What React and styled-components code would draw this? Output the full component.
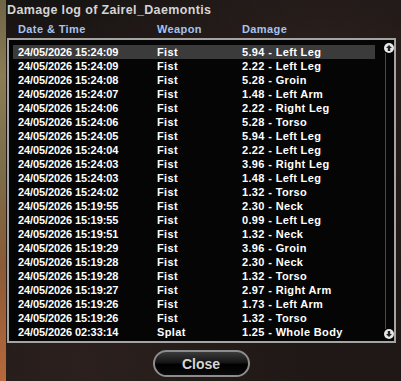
import React from 'react';
import styled, { createGlobalStyle } from 'styled-components';

const rows = [
  ['24/05/2026 15:24:09', 'Fist', '5.94 - Left Leg'],
  ['24/05/2026 15:24:09', 'Fist', '2.22 - Left Leg'],
  ['24/05/2026 15:24:08', 'Fist', '5.28 - Groin'],
  ['24/05/2026 15:24:07', 'Fist', '1.48 - Left Arm'],
  ['24/05/2026 15:24:06', 'Fist', '2.22 - Right Leg'],
  ['24/05/2026 15:24:06', 'Fist', '5.28 - Torso'],
  ['24/05/2026 15:24:05', 'Fist', '5.94 - Left Leg'],
  ['24/05/2026 15:24:04', 'Fist', '2.22 - Left Leg'],
  ['24/05/2026 15:24:03', 'Fist', '3.96 - Right Leg'],
  ['24/05/2026 15:24:03', 'Fist', '1.48 - Left Leg'],
  ['24/05/2026 15:24:02', 'Fist', '1.32 - Torso'],
  ['24/05/2026 15:19:55', 'Fist', '2.30 - Neck'],
  ['24/05/2026 15:19:55', 'Fist', '0.99 - Left Leg'],
  ['24/05/2026 15:19:51', 'Fist', '1.32 - Neck'],
  ['24/05/2026 15:19:29', 'Fist', '3.96 - Groin'],
  ['24/05/2026 15:19:28', 'Fist', '2.30 - Neck'],
  ['24/05/2026 15:19:28', 'Fist', '1.32 - Torso'],
  ['24/05/2026 15:19:27', 'Fist', '2.97 - Right Arm'],
  ['24/05/2026 15:19:26', 'Fist', '1.73 - Left Arm'],
  ['24/05/2026 15:19:26', 'Fist', '1.32 - Torso'],
  ['24/05/2026 02:33:14', 'Splat', '1.25 - Whole Body'],
];

const GlobalStyle = createGlobalStyle`
  html, body {
    margin: 0;
    padding: 0;
    background: #1e1715;
  }
  body {
    font-family: "Liberation Sans", Arial, sans-serif;
    -webkit-font-smoothing: antialiased;
  }
`;

const ScrollArrow = ({ down }) => (
  <svg width="10" height="10" viewBox="0 0 10 10">
    <circle cx="5" cy="5" r="5" fill="#e8e8e8" />
    <g transform={down ? 'rotate(180 5 5)' : undefined}>
      <path d="M5 2 L8 5 L6.2 5 L6.2 8 L3.8 8 L3.8 5 L2 5 Z" fill="#222" />
    </g>
  </svg>
);

const App = () => (
  <>
    <GlobalStyle />
    <Screen>
      <Edge />
      <Window>
        <Title>Damage log of Zairel_Daemontis</Title>
        <HeaderRow>
          <HeadCell>Date &amp; Time</HeadCell>
          <HeadCell>Weapon</HeadCell>
          <HeadCell>Damage</HeadCell>
        </HeaderRow>
        <ListBox>
          <Rows>
            {rows.map((r, i) => (
              <Row key={i} selected={i === 0}>
                <Cell>{r[0]}</Cell>
                <Cell spread>{r[1]}</Cell>
                <Cell spread>{r[2]}</Cell>
              </Row>
            ))}
          </Rows>
          <Scrollbar>
            <ScrollArrow />
            <Track />
            <ScrollArrow down />
          </Scrollbar>
        </ListBox>
        <Footer>
          <CloseButton>Close</CloseButton>
        </Footer>
      </Window>
    </Screen>
  </>
);

const Screen = styled.div`
  display: flex;
  width: 401px;
  height: 381px;
  overflow: hidden;
`;

const Edge = styled.div`
  width: 6px;
  flex-shrink: 0;
  background: linear-gradient(
    to bottom,
    #6f6446 0%,
    #8a7d55 20%,
    #7c6c48 45%,
    #8a5a36 70%,
    #b8683c 100%
  );
`;

const Window = styled.div`
  flex: 1;
  display: flex;
  flex-direction: column;
  background:
    radial-gradient(ellipse at 80% 20%, #2a1f1c 0%, rgba(30, 23, 21, 0) 60%),
    radial-gradient(ellipse at 20% 95%, #2b201d 0%, rgba(30, 23, 21, 0) 50%),
    linear-gradient(to bottom, #161413 0%, #1e1715 12%, #201816 100%);
`;

const Title = styled.div`
  height: 20px;
  line-height: 20px;
  padding-left: 1px;
  font-size: 12.5px;
  font-weight: 700;
  letter-spacing: 0.35px;
  color: #d4d4d4;
  white-space: nowrap;
`;

const HeaderRow = styled.div`
  display: grid;
  grid-template-columns: 139px 85px 1fr;
  height: 18px;
  align-items: center;
  padding-left: 12px;
`;

const HeadCell = styled.div`
  font-size: 11px;
  font-weight: 700;
  letter-spacing: 0.4px;
  color: #a6c3f0;
  white-space: nowrap;
`;

const ListBox = styled.div`
  display: flex;
  margin-left: 1px;
  margin-right: 5px;
  height: 305px;
  box-sizing: border-box;
  border: 2px solid #a4a4a4;
  background: #050505;
`;

const Rows = styled.div`
  flex: 1;
  padding: 5px 0 0 4px;
`;

const Row = styled.div`
  display: grid;
  grid-template-columns: 139px 85px 1fr;
  height: 14px;
  align-items: center;
  background: ${p => (p.selected ? '#3b3b3b' : 'transparent')};
`;

const Cell = styled.div`
  padding-left: 5px;
  font-size: 11px;
  font-weight: 700;
  letter-spacing: ${p => (p.spread ? '0.35px' : '-0.1px')};
  color: #ffffff;
  white-space: nowrap;
  line-height: 14px;
`;

const Scrollbar = styled.div`
  width: 19px;
  flex-shrink: 0;
  display: flex;
  flex-direction: column;
  align-items: center;
  padding: 3px 0 2px 9px;
  box-sizing: border-box;
`;

const Track = styled.div`
  flex: 1;
  width: 1px;
  margin-right: 8px;
  background: #4a4a4a;
`;

const Footer = styled.div`
  display: flex;
  justify-content: center;
  padding-top: 7px;
  padding-right: 5px;
`;

const CloseButton = styled.button`
  width: 97px;
  height: 27px;
  border-radius: 14px;
  border: 2px solid #8c8c8c;
  background: linear-gradient(to bottom, #3a3a3a 0%, #161616 45%, #000 55%, #0a0a0a 100%);
  color: #d6d6d6;
  font-family: "Liberation Sans", Arial, sans-serif;
  font-size: 14px;
  font-weight: 700;
  padding: 0;
  cursor: pointer;
`;

export default App;
